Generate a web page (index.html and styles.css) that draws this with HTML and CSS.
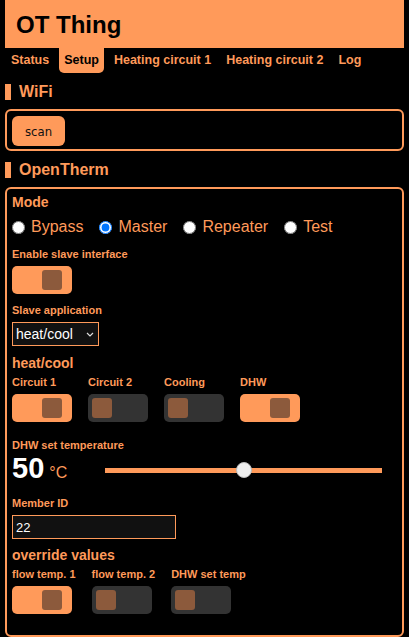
FILE: index.html
```html
<!DOCTYPE html>
<html lang="en">
<head>
<meta charset="utf-8">
<title>OT Thing</title>
<link rel="stylesheet" href="styles.css">
</head>
<body>
<header class="top"><h1 class="title">OT Thing</h1></header>
<nav class="tabs">
  <a class="tab">Status</a>
  <a class="tab active">Setup</a>
  <a class="tab">Heating circuit 1</a>
  <a class="tab">Heating circuit 2</a>
  <a class="tab">Log</a>
</nav>

<h2 class="sect">WiFi</h2>
<div class="box box-wifi"><button class="btn">scan</button></div>

<h2 class="sect">OpenTherm</h2>
<div class="box box-ot">
  <div class="group-title">Mode</div>
  <div class="radios">
    <label class="radio"><input type="radio" name="mode">Bypass</label>
    <label class="radio"><input type="radio" name="mode" checked>Master</label>
    <label class="radio"><input type="radio" name="mode">Repeater</label>
    <label class="radio"><input type="radio" name="mode">Test</label>
  </div>

  <div class="field f-enable">
    <div class="lbl">Enable slave interface</div>
    <span class="toggle on"><span class="knob"></span></span>
  </div>

  <div class="field f-app">
    <div class="lbl">Slave application</div>
    <div class="select-wrap">
      <select class="sel"><option>heat/cool</option></select>
      <svg class="chev" width="8" height="5" viewBox="0 0 8 5"><path d="M1 1 L4 4 L7 1" fill="none" stroke="#ddd" stroke-width="1.2"/></svg>
    </div>
  </div>

  <div class="group-title gt-heat">heat/cool</div>
  <div class="toggles">
    <div class="titem"><div class="lbl">Circuit 1</div><span class="toggle on"><span class="knob"></span></span></div>
    <div class="titem"><div class="lbl">Circuit 2</div><span class="toggle"><span class="knob"></span></span></div>
    <div class="titem"><div class="lbl">Cooling</div><span class="toggle"><span class="knob"></span></span></div>
    <div class="titem"><div class="lbl">DHW</div><span class="toggle on"><span class="knob"></span></span></div>
  </div>

  <div class="field f-dhw">
    <div class="lbl lbl-tight">DHW set temperature</div>
    <div class="temp-row">
      <div class="temp"><span class="temp-val">50</span><span class="temp-unit">°C</span></div>
      <input class="range" type="range" min="20" max="80" value="50">
    </div>
  </div>

  <div class="field f-member">
    <div class="lbl">Member ID</div>
    <input class="txt" type="text" value="22">
  </div>

  <div class="group-title gt-over">override values</div>
  <div class="toggles">
    <div class="titem"><div class="lbl">flow temp. 1</div><span class="toggle on"><span class="knob"></span></span></div>
    <div class="titem"><div class="lbl">flow temp. 2</div><span class="toggle"><span class="knob"></span></span></div>
    <div class="titem"><div class="lbl">DHW set temp</div><span class="toggle"><span class="knob"></span></span></div>
  </div>
</div>
</body>
</html>
```

FILE: styles.css
```css
* { box-sizing: border-box; }
html { margin: 0; background: #000; }
body {
  margin: 0 5px;
  background: #000;
  color: #ff9a5a;
  font-family: "Liberation Sans", Arial, sans-serif;
}

.top {
  background: #ff9a5a;
  height: 48px;
  padding: 11px 0 0 11px;
}
.title {
  margin: 0;
  font-size: 24px;
  line-height: 28px;
  font-weight: bold;
  color: #000;
}

.tabs {
  display: flex;
  gap: 5px;
  padding-left: 1px;
  height: 25px;
}
.tab {
  padding: 0 5px;
  font-size: 12.5px;
  font-weight: bold;
  line-height: 25px;
  color: #ff9a5a;
  border-radius: 0 0 5px 5px;
  white-space: nowrap;
}
.tab.active { background: #ff9a5a; color: #000; }

.sect {
  margin: 11px 0 9px;
  height: 16px;
  border-left: 6px solid #ff9a5a;
  padding-left: 8px;
  font-size: 16px;
  line-height: 16px;
  font-weight: bold;
}

.box {
  border: 2px solid #ff9a5a;
  border-radius: 6px;
  padding: 5px;
}
.box-wifi { padding-bottom: 3px; }
.box-ot { padding-bottom: 21px; }

.btn {
  display: block;
  height: 30px;
  padding: 0 13px;
  background: #ff9a5a;
  color: #111;
  border: none;
  border-radius: 6px;
  font-family: "DejaVu Sans Condensed", "DejaVu Sans", sans-serif;
  font-size: 13px;
}

.group-title {
  font-size: 14px;
  line-height: 16px;
  font-weight: bold;
}
.gt-heat { margin-top: 9px; }
.gt-over { margin-top: 8px; }

.radios {
  display: flex;
  align-items: center;
  gap: 16px;
  margin-top: 8px;
  height: 18px;
}
.radio {
  display: flex;
  align-items: center;
  font-size: 16px;
  line-height: 18px;
}
.radio input { margin: 0 6px 0 0; width: 13px; height: 13px; }

.lbl {
  font-size: 11px;
  line-height: 13px;
  font-weight: bold;
  margin-bottom: 5px;
  white-space: nowrap;
}
.lbl-tight { margin-bottom: 2px; }

.f-enable { margin-top: 12px; }
.f-app { margin-top: 10px; }
.f-dhw { margin-top: 17px; }
.f-member { margin-top: 11px; }

.toggle {
  display: flex;
  align-items: center;
  width: 60px;
  height: 28px;
  border-radius: 5px;
  background: #333;
  padding: 0 4px;
}
.toggle.on {
  background: #ff9a5a;
  justify-content: flex-end;
  padding-right: 10px;
}
.knob {
  width: 20px;
  height: 20px;
  border-radius: 3px;
  background: #8c5a3c;
}

.toggles {
  display: flex;
  gap: 16px;
  margin-top: 5px;
}
.titem { min-width: 60px; }

.select-wrap {
  position: relative;
  width: 87px;
  height: 24px;
}
.sel {
  appearance: none;
  -webkit-appearance: none;
  width: 87px;
  height: 24px;
  background: #111;
  color: #fff;
  border: 1px solid #ff9a5a;
  border-radius: 0;
  padding: 0 0 0 3px;
  font-family: "Liberation Sans", Arial, sans-serif;
  font-size: 14px;
}
.chev {
  position: absolute;
  left: 74px;
  top: 10px;
}

.temp-row {
  display: flex;
  align-items: center;
  height: 32px;
}
.temp {
  flex: none;
  width: 93px;
  display: flex;
  align-items: baseline;
  line-height: 32px;
}
.temp-val {
  font-size: 29px;
  font-weight: bold;
  color: #fff;
}
.temp-unit {
  font-size: 16px;
  margin-left: 5px;
  color: #ff9a5a;
}

.range {
  -webkit-appearance: none;
  appearance: none;
  flex: none;
  width: 277px;
  height: 16px;
  margin: 0;
  background: transparent;
}
.range::-webkit-slider-runnable-track {
  height: 5px;
  background: #ff9a5a;
  border: none;
}
.range::-webkit-slider-thumb {
  -webkit-appearance: none;
  width: 16px;
  height: 16px;
  border-radius: 50%;
  background: #eee;
  border: 1px solid #bbb;
  margin-top: -5.5px;
}

.txt {
  display: block;
  width: 164px;
  height: 24px;
  background: #111;
  color: #fff;
  border: 1px solid #ff9a5a;
  border-radius: 0;
  padding: 0 3px;
  font-family: "Liberation Sans", Arial, sans-serif;
  font-size: 13px;
  outline: none;
}
```
